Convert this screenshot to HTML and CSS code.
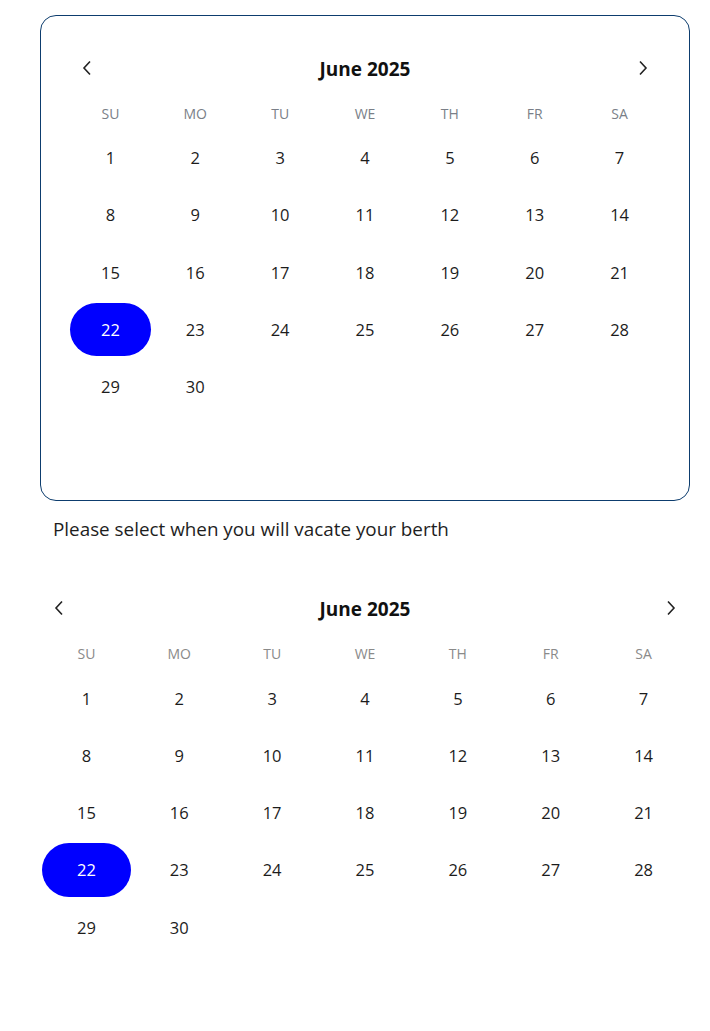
FILE: index.html
```html
<!DOCTYPE html>
<html lang="en">
<head>
<meta charset="utf-8">
<link rel="stylesheet" href="styles.css">
</head>
<body>
<div class="page">
  <div class="card">
    <div class="calendar">
      <div class="cal-header">
        <button class="nav" aria-label="Previous month"><svg width="10" height="16" viewBox="0 0 10 16"><path d="M8 1.5 L2 8 L8 14.5" fill="none" stroke="#222" stroke-width="1.6"/></svg></button>
        <div class="title">June 2025</div>
        <button class="nav" aria-label="Next month"><svg width="10" height="16" viewBox="0 0 10 16"><path d="M2 1.5 L8 8 L2 14.5" fill="none" stroke="#222" stroke-width="1.6"/></svg></button>
      </div>
      <div class="weekdays">
        <span>SU</span><span>MO</span><span>TU</span><span>WE</span><span>TH</span><span>FR</span><span>SA</span>
      </div>
      <div class="days">
        <span class="day">1</span><span class="day">2</span><span class="day">3</span><span class="day">4</span><span class="day">5</span><span class="day">6</span><span class="day">7</span>
        <span class="day">8</span><span class="day">9</span><span class="day">10</span><span class="day">11</span><span class="day">12</span><span class="day">13</span><span class="day">14</span>
        <span class="day">15</span><span class="day">16</span><span class="day">17</span><span class="day">18</span><span class="day">19</span><span class="day">20</span><span class="day">21</span>
        <span class="day selected">22</span><span class="day">23</span><span class="day">24</span><span class="day">25</span><span class="day">26</span><span class="day">27</span><span class="day">28</span>
        <span class="day">29</span><span class="day">30</span><span class="day empty"></span><span class="day empty"></span><span class="day empty"></span><span class="day empty"></span><span class="day empty"></span>
        <span class="day empty"></span><span class="day empty"></span><span class="day empty"></span><span class="day empty"></span><span class="day empty"></span><span class="day empty"></span><span class="day empty"></span>
      </div>
    </div>
  </div>

  <p class="prompt">Please select when you will vacate your berth</p>

  <div class="calendar plain">
    <div class="cal-header">
      <button class="nav" aria-label="Previous month"><svg width="10" height="16" viewBox="0 0 10 16"><path d="M8 1.5 L2 8 L8 14.5" fill="none" stroke="#222" stroke-width="1.6"/></svg></button>
      <div class="title">June 2025</div>
      <button class="nav" aria-label="Next month"><svg width="10" height="16" viewBox="0 0 10 16"><path d="M2 1.5 L8 8 L2 14.5" fill="none" stroke="#222" stroke-width="1.6"/></svg></button>
    </div>
    <div class="weekdays">
      <span>SU</span><span>MO</span><span>TU</span><span>WE</span><span>TH</span><span>FR</span><span>SA</span>
    </div>
    <div class="days">
      <span class="day">1</span><span class="day">2</span><span class="day">3</span><span class="day">4</span><span class="day">5</span><span class="day">6</span><span class="day">7</span>
      <span class="day">8</span><span class="day">9</span><span class="day">10</span><span class="day">11</span><span class="day">12</span><span class="day">13</span><span class="day">14</span>
      <span class="day">15</span><span class="day">16</span><span class="day">17</span><span class="day">18</span><span class="day">19</span><span class="day">20</span><span class="day">21</span>
      <span class="day selected">22</span><span class="day">23</span><span class="day">24</span><span class="day">25</span><span class="day">26</span><span class="day">27</span><span class="day">28</span>
      <span class="day">29</span><span class="day">30</span><span class="day empty"></span><span class="day empty"></span><span class="day empty"></span><span class="day empty"></span><span class="day empty"></span>
      <span class="day empty"></span><span class="day empty"></span><span class="day empty"></span><span class="day empty"></span><span class="day empty"></span><span class="day empty"></span><span class="day empty"></span>
    </div>
  </div>
</div>
</body>
</html>
```

FILE: styles.css
```css
* { box-sizing: border-box; }

html, body {
  margin: 0;
  padding: 0;
  background: #ffffff;
}

body {
  font-family: "Open Sans", "Noto Sans", "Liberation Sans", sans-serif;
  color: #222222;
}

.page {
  width: 650px;
  margin-left: 40px;
  padding-top: 15px;
}

.card {
  border: 1px solid #0d3d6e;
  border-radius: 16px;
  padding: 27px;
}

.cal-header {
  height: 50px;
  display: flex;
  align-items: center;
  justify-content: space-between;
}

.nav {
  width: 38px;
  height: 38px;
  padding: 0;
  border: none;
  background: transparent;
  display: flex;
  align-items: center;
  justify-content: center;
}

.title {
  font-size: 19px;
  font-weight: 700;
  color: #111111;
  padding-top: 2px;
}

.weekdays {
  height: 36px;
  padding-top: 4px;
  display: grid;
  grid-template-columns: repeat(7, 1fr);
  align-items: center;
  font-size: 14px;
  color: #7a7f88;
  text-align: center;
}

.days {
  display: grid;
  grid-template-columns: repeat(7, 1fr);
  grid-auto-rows: 57.25px;
}

.day {
  margin: 2px;
  display: flex;
  align-items: center;
  justify-content: center;
  font-size: 16.5px;
  color: #1c1c1c;
  border-radius: 27px;
}

.day.selected {
  background: #0000ff;
  color: #ffffff;
}

.prompt {
  margin: 16px 0 0 13px;
  font-size: 18.85px;
  line-height: 24px;
  color: #1e1e1e;
}

.plain {
  margin-top: 43px;
}

.plain .cal-header {
  margin-top: -1px;
  margin-bottom: 1px;
}

.plain .weekdays {
  color: #8a8a8a;
}
```
